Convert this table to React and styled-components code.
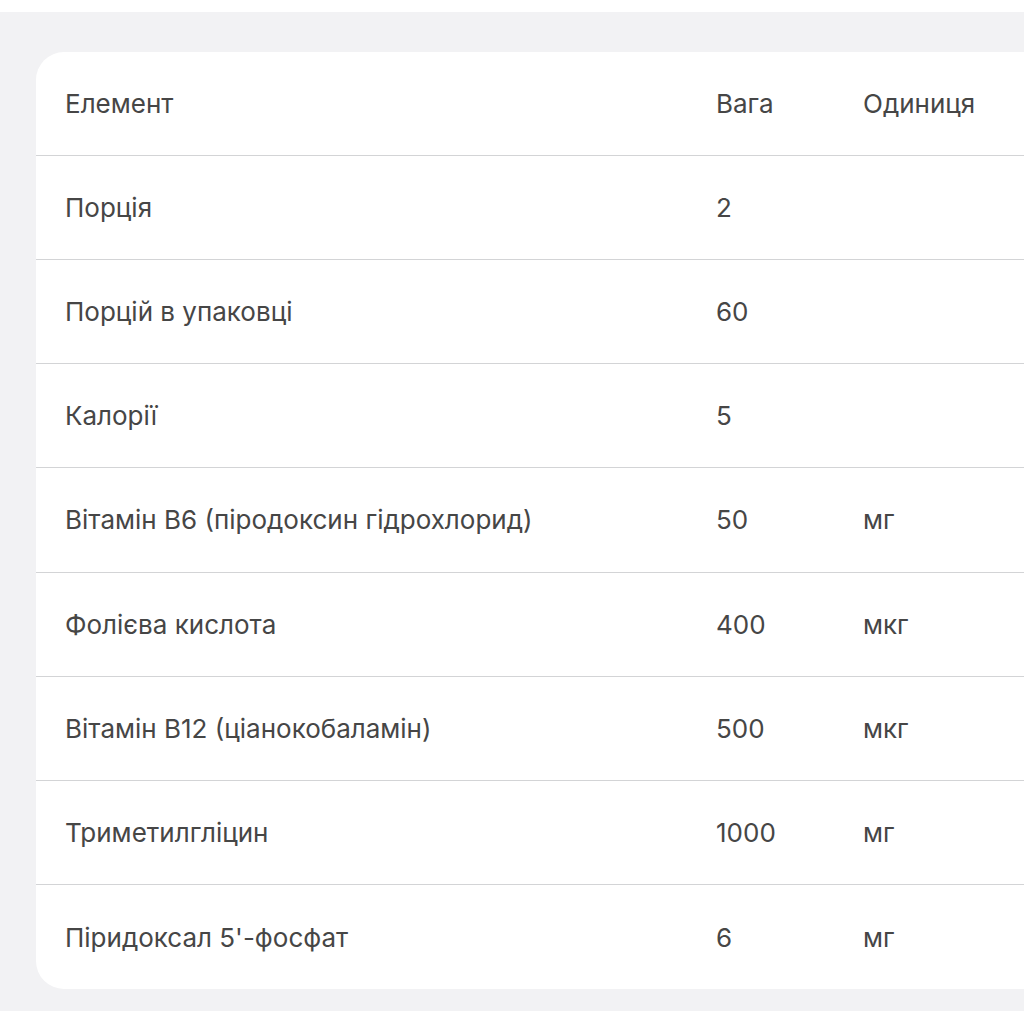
import styled, { createGlobalStyle } from "styled-components";

const GlobalStyle = createGlobalStyle`
  html, body {
    margin: 0;
    padding: 0;
    background: #ffffff;
  }
  body {
    font-family: Inter, "Open Sans", Arial, sans-serif;
    overflow: hidden;
  }
`;

const Page = styled.div`
  margin-top: 12px;
  height: 999px;
  box-sizing: border-box;
  background: #f2f2f4;
  padding: 40px 0 0 36px;
  overflow: hidden;
`;

const Card = styled.div`
  width: 1080px;
  background: #ffffff;
  border-radius: 28px;
  overflow: hidden;
`;

const Table = styled.table`
  width: 100%;
  border-collapse: collapse;
  color: #464646;
  font-size: 26px;
  line-height: 1.2;
`;

const Row = styled.tr`
  height: ${(props) => (props.first ? "103px" : "104.25px")};
  border-top: ${(props) => (props.first ? "none" : "1px solid #d3d4d6")};
`;

const Cell = styled.td`
  padding: 0 0 0 29px;
  text-align: left;
  font-weight: 400;
  vertical-align: middle;
  width: ${(props) => props.w || "auto"};
  box-sizing: border-box;
`;

const HeadCell = styled(Cell).attrs({ as: "th" })`
  font-weight: 400;
`;

const rows = [
  ["Порція", "2", ""],
  ["Порцій в упаковці", "60", ""],
  ["Калорії", "5", ""],
  ["Вітамін B6 (піродоксин гідрохлорид)", "50", "мг"],
  ["Фолієва кислота", "400", "мкг"],
  ["Вітамін B12 (ціанокобаламін)", "500", "мкг"],
  ["Триметилгліцин", "1000", "мг"],
  ["Піридоксал 5'-фосфат", "6", "мг"],
];

export default function App() {
  return (
    <>
      <GlobalStyle />
      <Page>
        <Card>
          <Table>
            <thead>
              <Row first>
                <HeadCell w="651px">Елемент</HeadCell>
                <HeadCell w="147px">Вага</HeadCell>
                <HeadCell>Одиниця</HeadCell>
              </Row>
            </thead>
            <tbody>
              {rows.map((r) => (
                <Row key={r[0]}>
                  <Cell>{r[0]}</Cell>
                  <Cell>{r[1]}</Cell>
                  <Cell>{r[2]}</Cell>
                </Row>
              ))}
            </tbody>
          </Table>
        </Card>
      </Page>
    </>
  );
}
